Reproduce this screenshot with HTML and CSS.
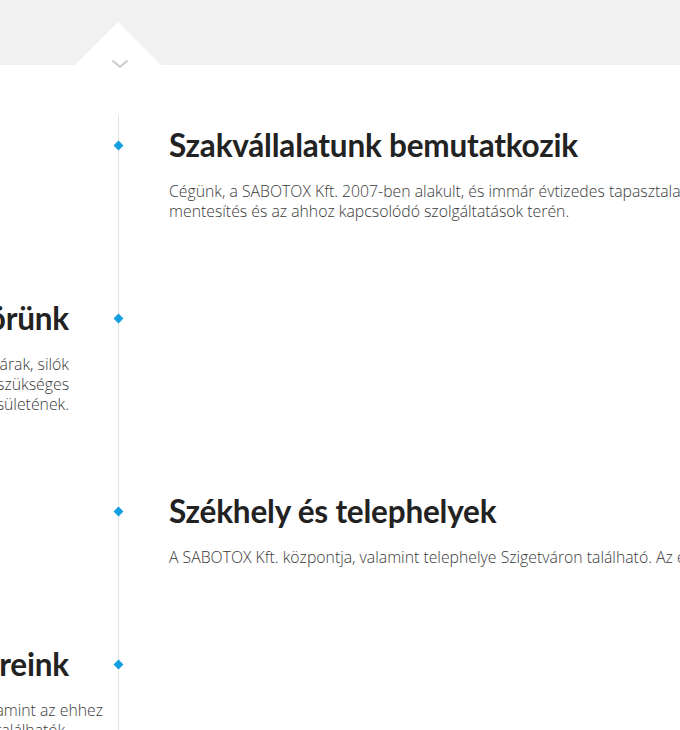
FILE: index.html
```html
<!DOCTYPE html>
<html>
<head>
	<meta charset="utf-8">
	<title>Rólunk</title>
	<link rel="stylesheet" href="styles.css">
</head>
<body>
<div class="top">
	<div class="peak"></div>
	<svg class="chevron" width="18" height="10" viewBox="0 0 18 10"><path d="M1.5 1.5 L9 8 L16.5 1.5" fill="none" stroke="#c9c9c9" stroke-width="2"/></svg>
</div>

<div class="timeline">
	<div class="item right">
		<div class="side"></div>
		<div class="mark"><span class="dot"></span></div>
		<div class="content">
			<h2>Szakvállalatunk bemutatkozik</h2>
			<p>Cégünk, a SABOTOX Kft. 2007-ben alakult, és immár évtizedes tapasztalattal rendelkezik az azbeszt-<br>mentesítés és az ahhoz kapcsolódó szolgáltatások terén.</p>
		</div>
	</div>

	<div class="item left">
		<div class="content">
			<h2>Tevékenységi körünk</h2>
			<p>Azbesztmentesítés lakóépületek, ipari csarnokok, gyárak, silók<br>esetében, valamint a bontáshoz és elszállításhoz szükséges<br>engedélyek beszerzése. Tagjai vagyunk az Egyesületének.</p>
		</div>
		<div class="mark"><span class="dot"></span></div>
		<div class="side"></div>
	</div>

	<div class="item right">
		<div class="side"></div>
		<div class="mark"><span class="dot"></span></div>
		<div class="content">
			<h2>Székhely és telephelyek</h2>
			<p>A SABOTOX Kft. központja, valamint telephelye Szigetváron található. Az egész ország területén vállalunk munkát.</p>
		</div>
	</div>

	<div class="item left">
		<div class="content">
			<h2>Partnereink</h2>
			<p>Megbízóink között hatóságok, cégek és magánszemélyek, valamint az ehhez<br>hasonló munkák fővállalkozói is megtalálhatók.</p>
		</div>
		<div class="mark"><span class="dot"></span></div>
		<div class="side"></div>
	</div>
</div>
</body>
</html>
```

FILE: styles.css
```css
*{
	margin: 0;
	padding: 0;
}
html, body{
	overflow: hidden;
	background: #fff;
}
body{
	font-family: "Lato", "Open Sans", sans-serif;
}

.top{
	height: 65px;
	background: #f1f1f1;
	position: relative;
}
.peak{
	position: absolute;
	left: 75px;
	bottom: 0;
	width: 86px;
	height: 43px;
	background: #fff;
	clip-path: polygon(50% 0, 100% 100%, 0 100%);
}
.chevron{
	position: absolute;
	left: 111px;
	top: 59px;
}

.timeline{
	margin-top: 50px;
	margin-left: -431px;
	width: 1500px;
}
.item{
	display: grid;
	grid-template-columns: 500px 100px 900px;
}
.item .content{
	padding-bottom: 79px;
}
.item.left .content{
	text-align: right;
}
.item:first-child .content,
.item:first-child .mark{
	padding-top: 12px;
}
.mark{
	background: linear-gradient(#e3e3e3, #e3e3e3) no-repeat 49px 0 / 1px 100%;
}
.dot{
	display: block;
	width: 7px;
	height: 7px;
	margin: 15px 0 0 46px;
	background: #139ee0;
	transform: rotate(45deg);
}

h2{
	font-size: 31.5px;
	line-height: 36px;
	font-weight: 700;
	color: #222;
	letter-spacing: -0.2px;
}
p{
	margin-top: 18px;
	font-family: "Open Sans", sans-serif;
	font-weight: 300;
	font-size: 15.8px;
	line-height: 20px;
	color: #3a3a3a;
	white-space: nowrap;
}
```
